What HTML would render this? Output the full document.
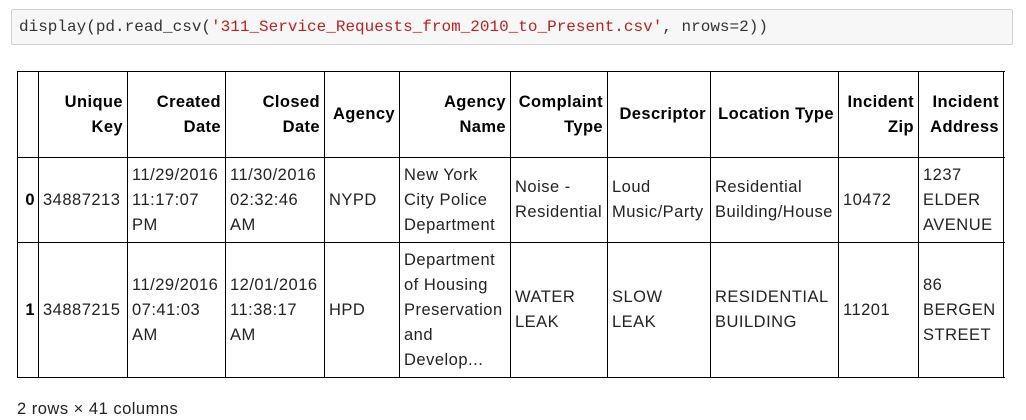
<!DOCTYPE html>
<html><head><style>
body{margin:0;width:1026px;height:420px;background:#fff;overflow:hidden;font-family:"Liberation Sans",Arial,sans-serif;position:relative}
.code{position:absolute;left:11px;top:9px;width:1002px;height:36px;background:#f7f7f7;border:1px solid #cfcfcf;border-radius:2px;box-sizing:border-box;font-family:"Liberation Mono",monospace;font-size:16px;line-height:34px;padding-left:7px;color:#333;white-space:pre}
.s{color:#ba2121}
.wrap{position:absolute;left:17px;top:71px;width:988px;height:310px;overflow:hidden}
table{border-collapse:collapse;table-layout:fixed;width:1087px;font-size:16.5px;letter-spacing:0.5px;color:#222}
td,th{border:1px solid #000;padding:0 4px;line-height:25px;vertical-align:middle;white-space:nowrap;overflow:hidden}
th{text-align:right;font-weight:bold;color:#000;letter-spacing:0.4px}
td{text-align:left;padding-left:4px}
td.i{font-weight:bold;color:#000;text-align:right;padding:0 3px}
tr.h{height:86px}
tr.r0{height:85px}
tr.r1{height:135px}
.foot{position:absolute;left:17px;top:400px;font-size:16.5px;letter-spacing:0.5px;color:#222}
</style></head><body>
<div class="code">display(pd.read_csv(<span class="s">'311_Service_Requests_from_2010_to_Present.csv'</span>, nrows=2))</div>
<div class="wrap"><table>
<colgroup><col style="width:21px"><col style="width:89px"><col style="width:98px"><col style="width:99px"><col style="width:75px"><col style="width:111px"><col style="width:97px"><col style="width:103px"><col style="width:128px"><col style="width:80px"><col style="width:85px"><col style="width:101px"></colgroup>
<tr class="h"><th></th><th>Unique<br>Key</th><th>Created<br>Date</th><th>Closed<br>Date</th><th>Agency</th><th>Agency<br>Name</th><th>Complaint<br>Type</th><th>Descriptor</th><th>Location Type</th><th>Incident<br>Zip</th><th>Incident<br>Address</th><th>Street<br>Name</th></tr>
<tr class="r0"><td class="i">0</td><td>34887213</td><td>11/29/2016<br>11:17:07<br>PM</td><td>11/30/2016<br>02:32:46<br>AM</td><td>NYPD</td><td>New York<br>City Police<br>Department</td><td>Noise -<br>Residential</td><td>Loud<br>Music/Party</td><td>Residential<br>Building/House</td><td>10472</td><td>1237<br>ELDER<br>AVENUE</td><td>ELDER<br>AVENUE</td></tr>
<tr class="r1"><td class="i">1</td><td>34887215</td><td>11/29/2016<br>07:41:03<br>AM</td><td>12/01/2016<br>11:38:17<br>AM</td><td>HPD</td><td>Department<br>of Housing<br>Preservation<br>and<br>Develop...</td><td>WATER<br>LEAK</td><td>SLOW<br>LEAK</td><td>RESIDENTIAL<br>BUILDING</td><td>11201</td><td>86<br>BERGEN<br>STREET</td><td>BERGEN<br>STREET</td></tr>
</table></div>
<div class="foot">2 rows × 41 columns</div>
</body></html>
